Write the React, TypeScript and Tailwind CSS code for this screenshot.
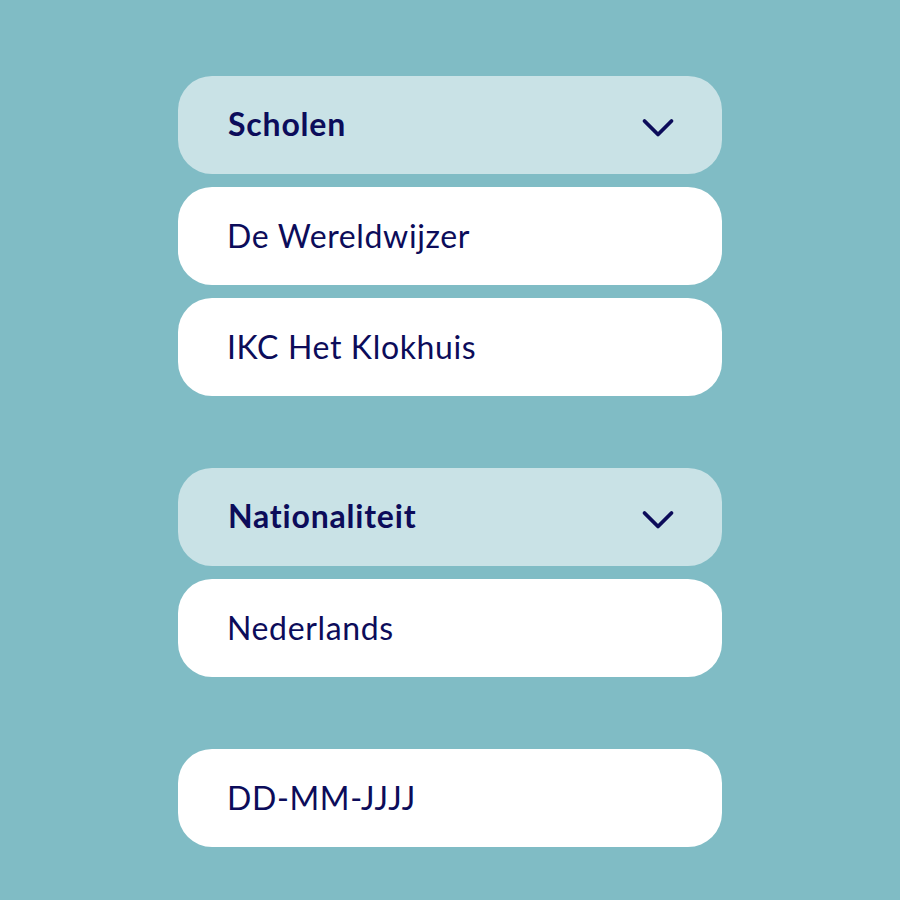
const navy = "text-[#0c0c5a]";

function Chevron() {
  return (
    <svg width="34" height="22" viewBox="0 0 34 22" fill="none" className="mt-[6px] shrink-0">
      <path
        d="M3.5 4 L17 17.5 L30.5 4"
        stroke="#0c0c5a"
        strokeWidth="3.8"
        strokeLinecap="round"
        strokeLinejoin="round"
      />
    </svg>
  );
}

function Header({ label }: { label: string }) {
  return (
    <div className="flex h-[98px] items-center justify-between rounded-[34px] bg-[#c9e2e6] pl-[50px] pr-[47px]">
      <span className={`-mt-[2px] text-[32px] font-bold tracking-[0.025em] ${navy}`}>{label}</span>
      <Chevron />
    </div>
  );
}

function Option({ label }: { label: string }) {
  return (
    <div className="flex h-[98px] items-center rounded-[34px] bg-white pl-[49px]">
      <span className={`-mt-[1px] text-[32px] tracking-[0.02em] ${navy}`}>{label}</span>
    </div>
  );
}

export default function App() {
  return (
    <div
      className="min-h-[900px] w-full bg-[#80bcc5] pt-[76px]"
      style={{ fontFamily: "Lato, 'Noto Sans', sans-serif" }}
    >
      <div className="ml-[178px] flex w-[544px] flex-col gap-[72px]">
        <div className="flex flex-col gap-[13px]">
          <Header label="Scholen" />
          <Option label="De Wereldwijzer" />
          <Option label="IKC Het Klokhuis" />
        </div>
        <div className="flex flex-col gap-[13px]">
          <Header label="Nationaliteit" />
          <Option label="Nederlands" />
        </div>
        <Option label="DD-MM-JJJJ" />
      </div>
    </div>
  );
}
